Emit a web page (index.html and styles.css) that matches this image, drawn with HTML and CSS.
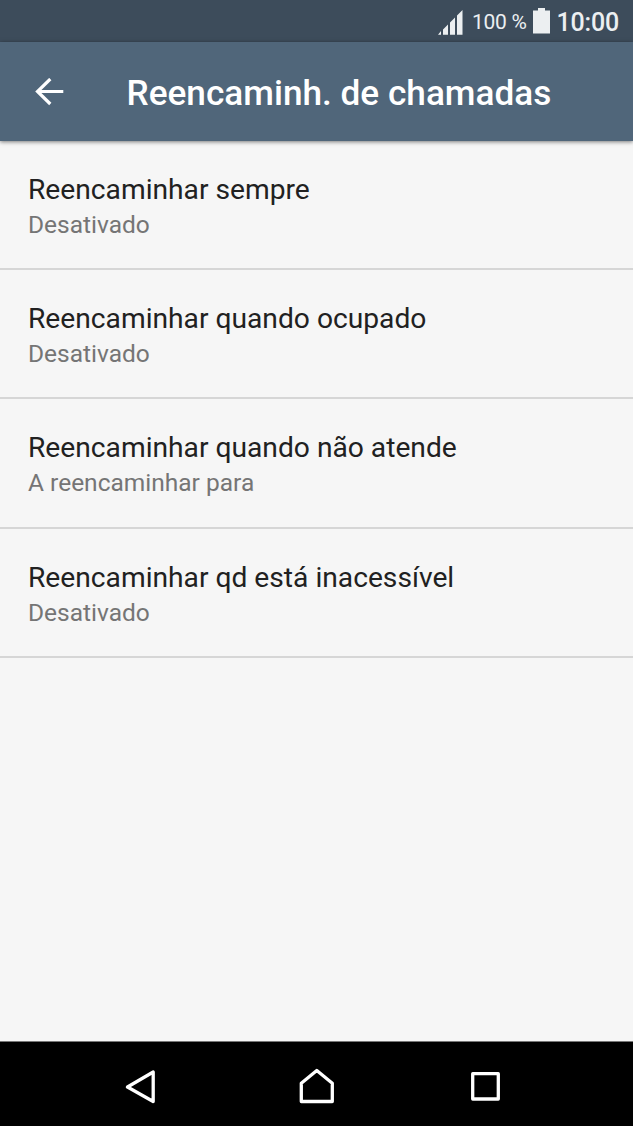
FILE: index.html
```html
<!DOCTYPE html>
<html lang="pt">
<head>
<meta charset="utf-8">
<title>Reencaminh. de chamadas</title>
<link rel="stylesheet" href="styles.css">
</head>
<body>
<div class="status">
  <svg class="signal" width="25" height="25" viewBox="0 0 25 25" fill="#eceff1"><path d="M0 24.700L3 21v3.700zM5 19.500l5-5v10.200H5zM12 12.500l5-5v17.200h-5zM19 5.500L24.500 0v24.700H19z"/></svg>
  <span class="percent">100 %</span>
  <svg class="battery" width="17" height="26" viewBox="0 0 17 26" fill="#eceff1"><path d="M5 0h7v2.500h5v23H0v-23h5z"/></svg>
  <span class="clock">10:00</span>
</div>
<header class="bar">
  <svg class="back" width="29" height="28" viewBox="0 0 29 28" fill="none" stroke="#fff" stroke-width="3.200"><path d="M28.300 13.500H2.500M15.300 1L2.500 13.500 15.300 26"/></svg>
  <h1 class="title">Reencaminh. de chamadas</h1>
</header>
<main class="list">
  <div class="row"><div class="name">Reencaminhar sempre</div><div class="state">Desativado</div></div>
  <div class="row"><div class="name">Reencaminhar quando ocupado</div><div class="state">Desativado</div></div>
  <div class="row"><div class="name">Reencaminhar quando não atende</div><div class="state">A reencaminhar para</div></div>
  <div class="row"><div class="name">Reencaminhar qd está inacessível</div><div class="state">Desativado</div></div>
</main>
<nav class="nav">
  <svg width="423" height="84" viewBox="0 1 423 84" fill="none" stroke="#fff" stroke-width="3.300" stroke-linejoin="round"><path d="M48.200 31v29.500L22.500 46zM196.300 60.500V42.300L211.800 29.500l15.500 12.800v18.200zM367.700 32.700h25.600v25.300h-25.600z"/></svg>
</nav>
</body>
</html>
```
FILE: styles.css
```css
* { box-sizing: border-box; }
body { margin: 0; height: 1126px; display: flex; flex-direction: column; font-family: Roboto, sans-serif; background: #f6f6f6; overflow: hidden; }
.status { height: 42px; flex: none; background: #3d4c5b; color: #eceff1; display: flex; align-items: center; justify-content: flex-end; padding-right: 14px; }
.signal { margin-top: 3px; }
.percent { font-size: 21px; letter-spacing: -.3px; margin: 2px 6px 0 9px; }
.clock { font-size: 25px; font-weight: 500; letter-spacing: -.2px; margin: 2px 0 0 7px; }
.bar { height: 99px; flex: none; background: #50667a; display: flex; align-items: center; padding-left: 35px; box-shadow: 0 1px 4px rgba(0,0,0,.5); }
.title { margin: 3px 0 0 62.500px; font-size: 35.200px; line-height: 41px; font-weight: 500; color: #fff; white-space: nowrap; }
.list { flex: 1; }
.row { height: 129.200px; padding: 31px 28px 0; border-bottom: 2px solid #d6d6d6; }
.name { font-size: 28.200px; line-height: 36px; color: #212121; white-space: nowrap; }
.state { font-size: 24.500px; line-height: 34px; color: #757575; }
.nav { height: 85px; flex: none; background: #000; border-top: 1px solid #777; display: flex; justify-content: center; }
```
